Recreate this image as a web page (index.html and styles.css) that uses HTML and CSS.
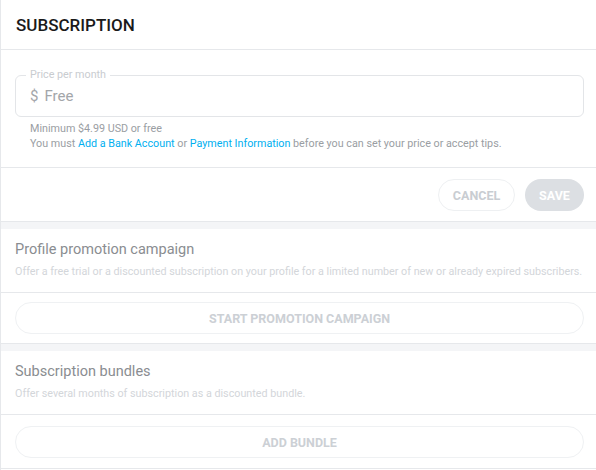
FILE: index.html
```html
<!DOCTYPE html>
<html>
<head>
<meta charset="utf-8">
<link rel="stylesheet" href="styles.css">
</head>
<body>
<div class="panel">
  <div class="header"><h1 class="title">SUBSCRIPTION</h1></div>

  <div class="form">
    <div class="field">
      <span class="field-label">Price per month</span>
      <span class="currency">$</span>
      <span class="value">Free</span>
    </div>
    <div class="help">
      <div>Minimum $4.99 USD or free</div>
      <div>You must <a class="link">Add a Bank Account</a> or <a class="link">Payment Information</a> before you can set your price or accept tips.</div>
    </div>
  </div>

  <div class="actions">
    <button class="btn btn-outline">CANCEL</button>
    <button class="btn btn-filled">SAVE</button>
  </div>

  <div class="gap"></div>

  <div class="section-head">
    <div class="section-title">Profile promotion campaign</div>
    <div class="section-desc">Offer a free trial or a discounted subscription on your profile for a limited number of new or already expired subscribers.</div>
  </div>
  <div class="section-body">
    <button class="btn btn-wide">START PROMOTION CAMPAIGN</button>
  </div>

  <div class="gap"></div>

  <div class="section-head">
    <div class="section-title">Subscription bundles</div>
    <div class="section-desc">Offer several months of subscription as a discounted bundle.</div>
  </div>
  <div class="section-body section-body-last">
    <button class="btn btn-wide">ADD BUNDLE</button>
  </div>
</div>
</body>
</html>
```
FILE: styles.css
```css
html, body {
  margin: 0;
  padding: 0;
  background: #fff;
}
body {
  font-family: Roboto, "Liberation Sans", sans-serif;
  width: 596px;
  height: 470px;
  overflow: hidden;
}
.panel {
  border-left: 1px solid #e6e8eb;
  min-height: 470px;
  box-sizing: border-box;
}
.header {
  height: 49px;
  border-bottom: 1px solid #e6e8eb;
  display: flex;
  align-items: center;
  padding-left: 15px;
}
.title {
  margin: 0;
  font-size: 17px;
  font-weight: 500;
  color: #1a1a1a;
}
.form {
  padding: 25px 12px 16px 14px;
  border-bottom: 1px solid #e6e8eb;
}
.field {
  position: relative;
  height: 42px;
  box-sizing: border-box;
  border: 1px solid #e3e5e8;
  border-radius: 6px;
  display: flex;
  align-items: center;
  padding-left: 14px;
  font-size: 15px;
  color: #a3a6aa;
}
.field-label {
  position: absolute;
  top: -8px;
  left: 10px;
  padding: 0 4px;
  background: #fff;
  font-size: 10.75px;
  line-height: 14px;
  color: #c9ccd0;
}
.currency {
  margin-right: 6px;
}
.help {
  padding: 4px 0 0 15px;
  font-size: 10.75px;
  line-height: 15px;
  color: #9a9ea3;
}
.link {
  color: #00aff0;
  text-decoration: none;
}
.actions {
  display: flex;
  justify-content: flex-end;
  gap: 10px;
  padding: 11px 12px 10px 0;
  border-bottom: 1px solid #e6e8eb;
}
.btn {
  font-family: Roboto, "Liberation Sans", sans-serif;
  font-size: 12.5px;
  font-weight: 700;
  height: 32px;
  border-radius: 16px;
  padding: 0;
  cursor: default;
}
.btn-outline {
  width: 77px;
  background: #fff;
  border: 1px solid #eef0f2;
  color: #c9cdd2;
}
.btn-filled {
  width: 59px;
  background: #dcdfe3;
  border: none;
  color: #fff;
}
.gap {
  height: 7px;
  background: #f4f5f7;
}
.section-head {
  padding: 11px 12px 13px 14px;
  border-bottom: 1px solid #e6e8eb;
}
.section-title {
  font-size: 14.5px;
  line-height: 20px;
  font-weight: 400;
  color: #8a8d91;
}
.section-desc {
  margin-top: 4px;
  font-size: 10.75px;
  line-height: 15px;
  color: #d3d6da;
  white-space: nowrap;
}
.section-body {
  padding: 9px 12px 9px 14px;
  border-bottom: 1px solid #e6e8eb;
}
.section-body-last {
  padding: 11px 12px 10px 14px;
}
.btn-wide {
  display: block;
  width: 100%;
  background: #fff;
  border: 1px solid #eff1f3;
  color: #ccd0d5;
}
```
